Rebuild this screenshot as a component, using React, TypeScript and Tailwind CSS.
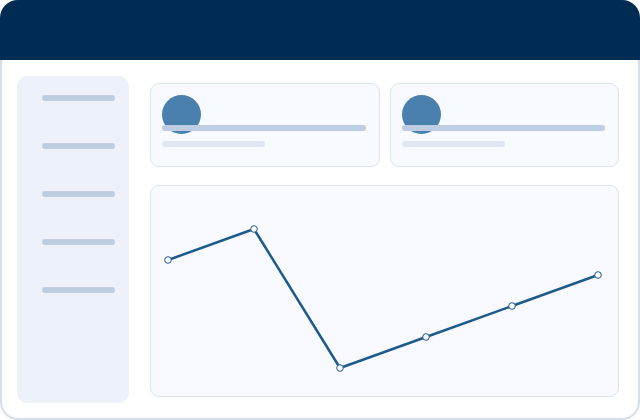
import React from "react";

const points: [number, number][] = [
  [18, 75],
  [104, 44],
  [190, 183],
  [276, 152],
  [362, 121],
  [448, 90],
];

function StatCard() {
  return (
    <div className="relative flex-1 h-[84px] rounded-[9px] border border-[#d9e4f4] bg-[#f7faff]">
      <div className="absolute left-[11px] top-[11px] w-[39px] h-[39px] rounded-full bg-[#4a80ad]" />
      <div className="absolute left-[11px] top-[41px] right-[13px] h-[6px] rounded-full bg-[#bfcde3]" />
      <div className="absolute left-[11px] top-[57px] w-[103px] h-[6px] rounded-full bg-[#e1e8f3]" />
    </div>
  );
}

export default function App() {
  return (
    <div className="w-[640px] h-[420px] bg-white">
      <div className="w-[640px] h-[420px] flex flex-col rounded-[18px] bg-[#d4deec] overflow-hidden">
        <div className="h-[60px] bg-[#002b53] shrink-0" />
        <div className="flex-1 mx-[2px] mb-[2px] rounded-b-[16px] bg-white flex pl-[15px] pt-[16px] pb-[15px] pr-[19px] gap-[21px]">
          <div className="w-[112px] h-[327px] rounded-[10px] bg-[#edf2fa] flex flex-col items-start pl-[25px] pt-[19px] gap-[42px]">
            {[0, 1, 2, 3, 4].map((i) => (
              <div key={i} className="w-[73px] h-[6px] rounded-full bg-[#bfcde3]" />
            ))}
          </div>
          <div className="flex-1 flex flex-col pt-[7px]">
            <div className="flex gap-[10px]">
              <StatCard />
              <StatCard />
            </div>
            <div className="mt-[18px] h-[212px] rounded-[9px] border border-[#d9e4f4] bg-[#f8faff] relative">
              <svg className="absolute -left-px -top-px" width="469" height="212" viewBox="0 0 469 212">
                <polyline
                  points={points.map((p) => p.join(",")).join(" ")}
                  fill="none"
                  stroke="#1e5a8b"
                  strokeWidth="2.5"
                  strokeLinejoin="round"
                />
                {points.map(([x, y], i) => (
                  <circle key={i} cx={x} cy={y} r="3.3" fill="#ffffff" stroke="#1e5a8b" strokeWidth="1" />
                ))}
              </svg>
            </div>
          </div>
        </div>
      </div>
    </div>
  );
}
